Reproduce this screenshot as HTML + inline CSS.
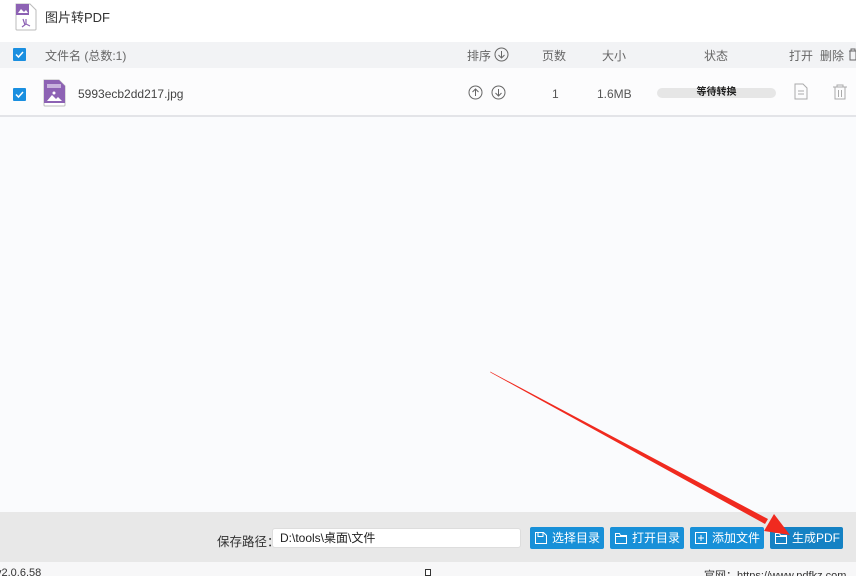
<!DOCTYPE html>
<html><head><meta charset="utf-8"><style>
*{margin:0;padding:0;box-sizing:border-box}
html,body{width:856px;height:576px;overflow:hidden}
body{position:relative;background:#fafbfd;font-family:"Liberation Sans","Noto Sans CJK SC",sans-serif;font-size:12px;color:#444}
.abs{position:absolute}
.top{left:0;top:0;width:856px;height:42px;background:#fff}
.hdr{left:0;top:42px;width:856px;height:26px;background:#f2f3f5;color:#666}
.row{left:0;top:68px;width:856px;height:49px;background:#fcfcfd;border-bottom:2px solid #e3e4e8}
.cb{width:13px;height:13px;background:#1a8fe0;border-radius:1px}
.cb svg{display:block}
.bar{left:0;top:512px;width:856px;height:50px;background:#e8e8e8}
.btn{top:527px;height:22px;background:#1890d8;color:#fff;border-radius:2px;font-size:12px;line-height:22px;padding-left:22px}
.btn svg{position:absolute;left:4px;top:4px}
.foot{left:0;top:562px;width:856px;height:14px;background:#f7f7f8;font-size:11px;color:#333;overflow:hidden}
</style></head><body>
<div class="abs top"></div>
<svg class="abs" style="left:14px;top:3px" width="24" height="28" viewBox="0 0 24 28"><path d="M2 1h14l6 6v19a1 1 0 0 1-1 1H3a1 1 0 0 1-1-1z" fill="#fff" stroke="#bbb"/><rect x="2" y="1" width="13" height="11" fill="#8d62b4"/><path d="M4 10l3-4 3 3 2-2 2 3z" fill="#fff"/><path d="M9 16l2 6M12 16v5l-4 3M12 21l4 2" stroke="#8d62b4" fill="none" stroke-width="1.2"/></svg>
<div class="abs" style="left:45px;top:7px;font-size:13px;color:#333">图片转PDF</div>
<div class="abs hdr"></div>
<div class="abs cb" style="left:13px;top:48px"><svg width="13" height="13"><path d="M3 6.5l2.5 2.5 4.5-5" stroke="#fff" stroke-width="1.5" fill="none"/></svg></div>
<div class="abs" style="left:45px;top:47px;color:#666">文件名 (总数:1)</div>
<div class="abs" style="left:467px;top:47px;color:#666">排序</div>
<svg class="abs" style="left:494px;top:47px" width="15" height="15"><circle cx="7.5" cy="7.5" r="6.5" fill="none" stroke="#666"/><path d="M7.5 4v7M4.5 8l3 3 3-3" stroke="#666" fill="none"/></svg>
<div class="abs" style="left:542px;top:47px;color:#666">页数</div>
<div class="abs" style="left:602px;top:47px;color:#666">大小</div>
<div class="abs" style="left:704px;top:47px;color:#666">状态</div>
<div class="abs" style="left:789px;top:47px;color:#666">打开</div>
<div class="abs" style="left:820px;top:47px;color:#666">删除</div>
<svg class="abs" style="left:848px;top:48px" width="10" height="13"><path d="M1 3h8M3 3V1h4v2M2 3v9h6V3" stroke="#666" fill="none"/></svg>
<div class="abs row"></div>
<div class="abs cb" style="left:13px;top:88px"><svg width="13" height="13"><path d="M3 6.5l2.5 2.5 4.5-5" stroke="#fff" stroke-width="1.5" fill="none"/></svg></div>
<svg class="abs" style="left:43px;top:79px" width="24" height="28" viewBox="0 0 24 28"><path d="M1 1h15l6 6v19a1 1 0 0 1-1 1H2a1 1 0 0 1-1-1z" fill="#fff" stroke="#bbb"/><path d="M1 1h15l6 6v17H1z" fill="#8d62b4"/><rect x="4" y="5" width="14" height="4" fill="#c8b3dd"/><path d="M4 22l5-6 4 4 2-2 4 4z" fill="#fff"/><circle cx="11" cy="14" r="1.5" fill="#fff"/></svg>
<div class="abs" style="left:78px;top:87px;color:#444">5993ecb2dd217.jpg</div>
<svg class="abs" style="left:468px;top:85px" width="15" height="15"><circle cx="7.5" cy="7.5" r="6.5" fill="none" stroke="#666"/><path d="M7.5 11V4M4.5 7l3-3 3 3" stroke="#666" fill="none"/></svg>
<svg class="abs" style="left:491px;top:85px" width="15" height="15"><circle cx="7.5" cy="7.5" r="6.5" fill="none" stroke="#666"/><path d="M7.5 4v7M4.5 8l3 3 3-3" stroke="#666" fill="none"/></svg>
<div class="abs" style="left:552px;top:87px;color:#555">1</div>
<div class="abs" style="left:597px;top:87px;color:#555">1.6MB</div>
<div class="abs" style="left:657px;top:88px;width:119px;height:10px;background:#e6e6e6;border-radius:5px;font-size:10px;line-height:10px;text-align:center;color:#222;font-weight:bold">等待转换</div>
<svg class="abs" style="left:794px;top:83px" width="14" height="17"><path d="M1 1h8l4 4v11H1z" fill="none" stroke="#aaa"/><path d="M4 8h6M4 11h6" stroke="#aaa"/></svg>
<svg class="abs" style="left:832px;top:84px" width="16" height="16"><path d="M1 3h14M5 3V1h6v2M3 3v12h10V3M6.5 6v7M9.5 6v7" stroke="#aaa" fill="none"/></svg>
<div class="abs bar"></div>
<div class="abs" style="left:217px;top:531px;font-size:12.5px;color:#333">保存路径：</div>
<div class="abs" style="left:272px;top:528px;width:249px;height:20px;background:#fff;border-radius:3px;border:1px solid #ddd;padding-left:7px;line-height:18px;color:#222">D:\tools\桌面\文件</div>
<div class="abs btn" style="left:530px;width:74px"><svg width="14" height="14"><path d="M1.5 1.5h8l3 3v8h-11z" fill="none" stroke="#fff"/><path d="M4 1.5v4h5v-4" stroke="#fff" fill="none"/></svg>选择目录</div>
<div class="abs btn" style="left:610px;width:74px"><svg width="14" height="14"><path d="M1.5 2.5h4l1 2h6v8h-11z" fill="none" stroke="#fff"/><path d="M1.5 5.5h11" stroke="#fff"/></svg>打开目录</div>
<div class="abs btn" style="left:690px;width:74px"><svg width="14" height="14"><rect x="1.5" y="1.5" width="11" height="11" fill="none" stroke="#fff"/><path d="M7 4v6M4 7h6" stroke="#fff"/></svg>添加文件</div>
<div class="abs btn" style="left:770px;width:73px;background:#1582c4"><svg width="14" height="14"><path d="M1.5 2.5h4l1 2h6v8h-11z" fill="none" stroke="#fff"/><path d="M1.5 5.5h11" stroke="#fff"/></svg>生成PDF</div>
<svg class="abs" style="left:0;top:0" width="856" height="576"><polygon points="490,371.5 490.5,372.5 765,524 768,519" fill="#f02a1f"/><polygon points="774,514 790,535 764,531" fill="#f02a1f"/></svg>
<div class="abs foot"><span style="position:absolute;left:-4px;top:5px">v2.0.6.58</span><span style="position:absolute;left:704px;top:5px">官网：https://www.pdfkz.com</span></div>
<div class="abs" style="left:425px;top:569px;width:6px;height:7px;border:1px solid #333;background:#fff"></div>
</body></html>
